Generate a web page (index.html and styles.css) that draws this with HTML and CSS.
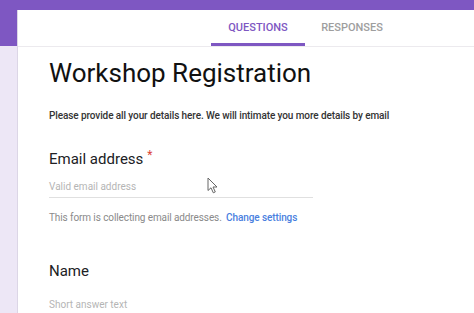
FILE: index.html
```html
<!DOCTYPE html>
<html lang="en">
<head>
  <meta charset="UTF-8" />
  <title>Workshop Registration</title>
  <link rel="stylesheet" href="styles.css">
</head>
<body>
  <div class="page">
    <div class="card">
      <div class="tab-bar">
        <a class="tab active">QUESTIONS</a>
        <a class="tab">RESPONSES</a>
      </div>

      <div class="form-body">
        <h1 class="form-title">Workshop Registration</h1>
        <p class="form-desc">Please provide all your details here. We will intimate you more details by email</p>

        <div class="question">
          <div class="q-label">Email address<span class="required">*</span></div>
          <div class="q-input email-input">
            Valid email address
            <svg class="cursor" width="12" height="17" viewBox="0 0 12 17">
              <path d="M1 1 L1 13.5 L4 10.8 L6.3 15.8 L8.3 14.9 L6 10 L10 10 Z" fill="#fff" stroke="#666" stroke-width="1" stroke-linejoin="round" />
            </svg>
          </div>
          <div class="q-note">This form is collecting email addresses. <a class="link">Change settings</a></div>
        </div>

        <div class="question name-question">
          <div class="q-label">Name</div>
          <div class="q-input plain">Short answer text</div>
        </div>
      </div>
    </div>
  </div>
</body>
</html>
```

FILE: styles.css
```css
body {
  margin: 0;
  font-family: Roboto, "Noto Sans", Arial, sans-serif;
  color: #202124;
  overflow: hidden;
}

.page {
  height: 313px;
  padding: 10px 0 0 17px;
  box-sizing: border-box;
  background: linear-gradient(#7e57c2 0, #7e57c2 46px, #ede7f6 46px);
}

.card {
  height: 100%;
  background: #fff;
  border-left: 1px solid #dcd6e6;
}

.tab-bar {
  display: flex;
  height: 36px;
  padding-left: 193px;
  border-bottom: 1px solid #eceaee;
}

.tab {
  width: 94px;
  display: flex;
  align-items: center;
  justify-content: center;
  padding-top: 1px;
  font-size: 11px;
  font-weight: 500;
  color: #9e9e9e;
  box-sizing: border-box;
  border-bottom: 3px solid transparent;
}

.tab.active {
  color: #7e57c2;
  border-bottom-color: #7e57c2;
}

.form-body {
  padding: 10px 0 0 31px;
}

.form-title {
  margin: 0;
  font-size: 26px;
  line-height: 32px;
  font-weight: 400;
  color: #111;
}

.form-desc {
  margin: 20px 0 0;
  font-size: 10px;
  line-height: 14px;
  font-weight: 500;
  color: #333;
  letter-spacing: -0.1px;
}

.question {
  margin-top: 26px;
}

.q-label {
  font-size: 15px;
  line-height: 20px;
  color: #202124;
}

.required {
  display: inline-block;
  margin-left: 4px;
  color: #db4437;
  font-size: 12px;
  line-height: 12px;
  vertical-align: top;
}

.q-input {
  position: relative;
  width: 264px;
  margin-top: 11px;
  padding-bottom: 3px;
  font-size: 10px;
  line-height: 14px;
  color: #b5b5b5;
  border-bottom: 1px solid #e0e0e0;
}

.q-input.plain {
  border-bottom-color: transparent;
  margin-top: 17px;
}

.cursor {
  position: absolute;
  left: 158px;
  top: -3px;
}

.q-note {
  margin-top: 13px;
  font-size: 10px;
  line-height: 14px;
  color: #8a8a8a;
  letter-spacing: -0.1px;
}

.link {
  margin-left: 2px;
  color: #4a7fe0;
  font-weight: 500;
}

.name-question {
  margin-top: 36px;
}
```
